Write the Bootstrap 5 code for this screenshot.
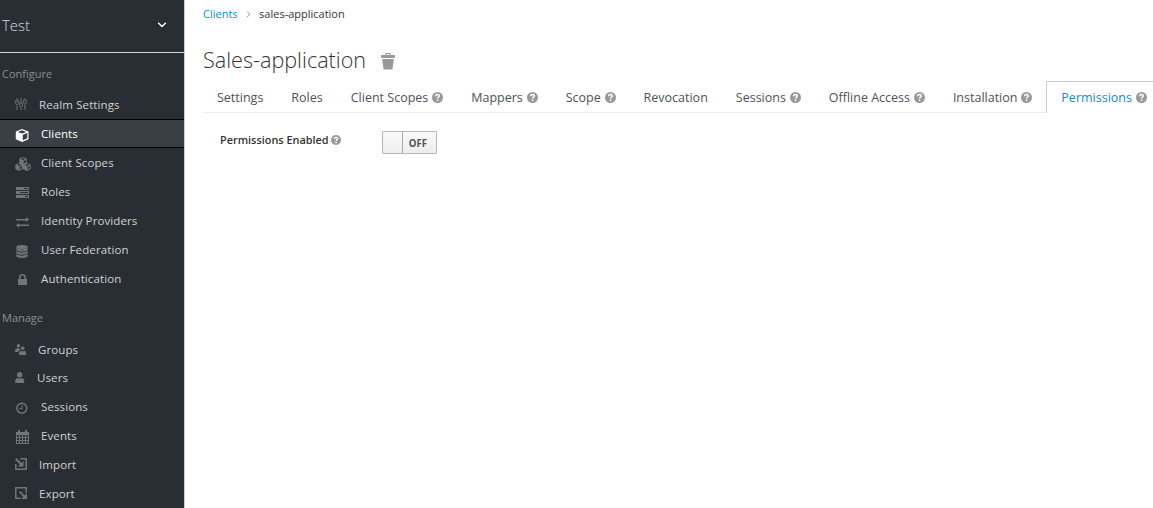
<!DOCTYPE html>
<html lang="en">
<head>
<meta charset="utf-8">
<meta name="viewport" content="width=device-width, initial-scale=1">
<title>Sales-application</title>
<link href="https://cdn.jsdelivr.net/npm/bootstrap@5.3.0/dist/css/bootstrap.min.css" rel="stylesheet">
<style>
body{font-family:"Open Sans",sans-serif;font-size:11px;line-height:18px;color:#333;background:#fff;height:508px;overflow:hidden}
a{text-decoration:none}
.side{width:185px;height:508px;background:#292e34;border-right:1px solid #d1d1d1}
.realm{height:53px;border-bottom:1px solid #d5d5d5;color:#dbdbdb;font-size:15px;font-weight:300;padding:0 17px 2px 2px}
.group-title{height:37px;padding:12px 0 0 2px;color:#8b8d8f;font-size:11px}
.group-title.second{height:42px;padding-top:16px}
.side .nav-link{height:29px;padding:0 0 0 15px;color:#d1d1d1;font-size:11.5px;letter-spacing:.11px;border:solid transparent;border-width:1px 0}
.side .nav-link.active{background:#393f45;border-color:#030303;color:#fff}
.side .nav-link.short{height:28px;padding-top:1px}
.ico{width:26px;height:15px;color:#72767b;flex:none;display:block;padding-top:2px}
.active .ico{color:#fff}
.ico.pf{width:24px;padding:0}.ico.grp{width:23px;padding:2px 0 0}.ico.usr{width:22px;padding:2px 0 0}
.ico.low{padding-top:3px}
.ico.pf.eq,.ico.pf.io{padding-top:1px}
.ico svg,.trash svg{display:block;fill:currentColor;overflow:visible}
.main{padding-left:18px;width:968px;overflow:hidden}
.crumbs{height:28px;font-size:11px}
.crumbs a,.tabs .nav-link.active{color:#0a8fd0}
h1{font-size:21.6px;font-weight:300;line-height:26px;margin:15px 0 4px;height:34px;color:#333}
.trash{color:#999;margin-left:15px;padding-top:3px}
.tabs{height:32px;width:1000px;border-bottom:1px solid #ededec}
.tabs .nav-link{height:32px;padding:1px 14px 0;border:0;border-radius:0;color:#4d5258;font-size:12.5px;white-space:nowrap;gap:3.9px}
.tabs .nav-link.active{background:#fff;border:1px solid #d1d1d1;border-bottom:0;padding-top:0}
.help{width:11px;height:11px;flex:none;display:block}
.perm{padding:18px 0 0 17px}
.perm-label{width:162px;font-weight:600;font-size:10.9px;gap:2.5px;height:18px}
.perm-label .help{width:10px;height:10px}
.switch{width:55px;height:23px;border:1px solid #b7b7b7;border-radius:1px;background:linear-gradient(#fafafa,#ededed);font-size:9.7px;font-weight:700;color:#4d5258}
.knob{width:20px;border-right:1px solid #aaa;align-self:stretch}
.off{padding:2px 3px 0 0}
</style>
</head>
<body class="d-flex">
<svg class="d-none">
<symbol id="q" viewBox="0 0 12 12"><circle cx="6" cy="6" r="6" fill="#999"/><path d="M3.900 4.700C4 3.300 4.900 2.800 6 2.800 7.200 2.800 8 3.400 8 4.300 8 5.500 6.100 5.500 6.100 7.200" fill="none" stroke="#fff" stroke-width="1.600"/><path d="M5.200 8.100h1.700v1.700H5.200z" fill="#fff"/></symbol>
</svg>
<nav class="side flex-shrink-0">
<div class="realm d-flex align-items-center justify-content-between"><span>Test</span><svg width="10" height="6" viewBox="0 0 10 6"><path d="M1.200.8 5 4.600 8.800.8" fill="none" stroke="#fff" stroke-width="1.400"/></svg></div>
<div class="group-title">Configure</div>
<div class="nav flex-column flex-nowrap">
<a class="nav-link d-flex align-items-center" href="#"><span class="ico pf eq"><svg width="12" height="13"><path d="M1.500 0h1v4h-1zM1.500 8h1v4h-1zM5.500 0h1v6h-1zM5.500 10h1v2h-1zM9.500 0h1v3h-1zM9.500 7h1v5h-1z"/><path d="M.7 2v3.500L2 7l1.300-1.500V2M4.700 4.500V8L6 9.500 7.300 8V4.500M8.700 1.500V5L10 6.500 11.300 5V1.500" fill="none" stroke="currentColor" stroke-width=".9"/></svg></span>Realm Settings</a>
<a class="nav-link active d-flex align-items-center" href="#"><span class="ico low"><svg width="14" height="13" viewBox="0 0 14 13"><path fill-rule="evenodd" d="M7 0l6.500 2.400v7.800L7 13 .8 10.200V2.400zM7 1.300 2.700 2.900 7 4.500l4.300-1.600zM7.800 5.700v5.500l4.500-2V4z"/></svg></span>Clients</a>
<a class="nav-link d-flex align-items-center" href="#"><span class="ico"><svg width="16" height="14" viewBox="0 0 16 13" preserveAspectRatio="none"><path fill-rule="evenodd" d="M8 0l3.700 1.500v4l4 1.600v4L12 13l-4-1.800L4 13 .3 11.100v-4l4-1.600v-4zM8 1 5.800 1.900 8 2.800l2.200-.9zM8.500 3.700v2.200l2.300-.9V2.800zM4.200 6.500 2 7.400l2.200.9 2.200-.9zM4.700 9.200v2.300L7 10.400V8.300zM12 6.500l-2.200.9 2.200.9 2.200-.9zM12.500 9.200v2.300l2.300-1.100V8.300z"/></svg></span>Client Scopes</a>
<a class="nav-link d-flex align-items-center" href="#"><span class="ico"><svg width="14" height="12"><path fill-rule="evenodd" d="M1 1h13v3H1zM1 5h13v3H1zM1 9h13v3H1zM9 2v1h4V2zM5 6v1h8V6zM10 10v1h3v-1z"/></svg></span>Roles</a>
<a class="nav-link d-flex align-items-center" href="#"><span class="ico low"><svg width="14" height="12"><path d="M1 3h10V1l3 2.500L11 6V4.500H1zM14 8.500H4V7L1 9.300l3 2.400V10h10z"/></svg></span>Identity Providers</a>
<a class="nav-link d-flex align-items-center" href="#"><span class="ico low"><svg width="13" height="13"><ellipse cx="7" cy="2" rx="5.800" ry="2"/><path d="M1.200 3.100Q7 6 12.800 3.100v1.600Q12 6.500 7 6.600 2 6.500 1.200 4.700zM1.200 6.200Q7 9 12.800 6.200v1.600Q12 9.600 7 9.700 2 9.600 1.200 7.800zM1.200 9.300Q7 12.100 12.800 9.300V11Q12 12.900 7 13 2 12.900 1.200 11z"/></svg></span>User Federation</a>
<a class="nav-link d-flex align-items-center" href="#"><span class="ico low"><svg width="13" height="12"><path d="M3 5h9v6H3z"/><path d="M4.800 6V3.400a2.700 2.700 0 0 1 5.400 0V6" fill="none" stroke="currentColor" stroke-width="1.600"/></svg></span>Authentication</a>
</div>
<div class="group-title second">Manage</div>
<div class="nav flex-column flex-nowrap">
<a class="nav-link short d-flex align-items-center" href="#"><span class="ico grp"><svg width="11" height="11"><circle cx="3.500" cy="1.800" r="1.700"/><circle cx="7.700" cy="4.300" r="1.800"/><path d="M0 8V6.200Q.3 4.200 2.500 4.200h2.200Q5.500 6.200 4 7.100 3 7.500 2.900 8zM4 11V9Q4.300 7 6 6.800q1.700 1 3.400 0Q11 7 11 9v2z"/></svg></span>Groups</a>
<a class="nav-link d-flex align-items-center" href="#"><span class="ico usr"><svg width="10" height="11"><circle cx="4.700" cy="2.700" r="2.700"/><path d="M.2 11V8.500Q.5 6.300 2.700 6q2 1.200 4 0Q9 6.300 9.200 8.500V11z"/></svg></span>Users</a>
<a class="nav-link d-flex align-items-center" href="#"><span class="ico low"><svg width="13" height="12"><circle cx="6.800" cy="6.200" r="4.900" fill="none" stroke="currentColor" stroke-width="1.500"/><path d="M7 3v3.700H4.300" fill="none" stroke="currentColor"/></svg></span>Sessions</a>
<a class="nav-link d-flex align-items-center" href="#"><span class="ico"><svg width="14" height="14"><path fill-rule="evenodd" d="M1 2h2V0h2v2h5V0h2v2h2v12H1zM2 5v2h2V5zM5 5v2h2V5zM8 5v2h2V5zM11 5v2h2V5zM2 8v2h2V8zM5 8v2h2V8zM8 8v2h2V8zM11 8v2h2V8zM2 11v2h2v-2zM5 11v2h2v-2zM8 11v2h2v-2zM11 11v2h2v-2z"/></svg></span>Events</a>
<a class="nav-link d-flex align-items-center" href="#"><span class="ico pf io"><svg width="12" height="12"><path d="M5.500.8h5.700v10.400H.8V6" fill="none" stroke="currentColor" stroke-width="1.500"/><path d="M0 1.500 1.500 0 6.500 5 8.500 3v5.500H3L5 6.500z"/></svg></span>Import</a>
<a class="nav-link d-flex align-items-center" href="#"><span class="ico pf io"><svg width="12" height="12"><path d="M5.500 11.200H.8V.8h10.400v5" fill="none" stroke="currentColor" stroke-width="1.500"/><path d="M4 5.300 5.300 4l4.200 4.200L12 6.500V12H6.500l1.700-2.500z"/></svg></span>Export</a>
</div>
</nav>
<main class="main">
<div class="crumbs d-flex align-items-center"><a href="#">Clients</a><svg class="mx-2" width="5.500" height="8" viewBox="0 0 5 8"><path d="m1 1.500 2.500 2.700L1 7" fill="none" stroke="#999"/></svg><span>sales-application</span></div>
<h1 class="d-flex align-items-center"><span>Sales-application</span><span class="trash"><svg width="14" height="17"><path fill-rule="evenodd" d="M0 2h4.500V0h5v2H14v3H0zM5.700 1v1h2.600V1zM1.200 6h11.600l-1.300 10.500h-9z"/></svg></span></h1>
<div class="nav tabs flex-nowrap">
<a class="nav-link d-flex align-items-center" href="#">Settings</a>
<a class="nav-link d-flex align-items-center" href="#">Roles</a>
<a class="nav-link d-flex align-items-center" href="#">Client Scopes<svg class="help"><use href="#q"/></svg></a>
<a class="nav-link d-flex align-items-center" href="#">Mappers<svg class="help"><use href="#q"/></svg></a>
<a class="nav-link d-flex align-items-center" href="#">Scope<svg class="help"><use href="#q"/></svg></a>
<a class="nav-link d-flex align-items-center" href="#">Revocation</a>
<a class="nav-link d-flex align-items-center" href="#">Sessions<svg class="help"><use href="#q"/></svg></a>
<a class="nav-link d-flex align-items-center" href="#">Offline Access<svg class="help"><use href="#q"/></svg></a>
<a class="nav-link d-flex align-items-center" href="#">Installation<svg class="help"><use href="#q"/></svg></a>
<a class="nav-link active d-flex align-items-center" href="#">Permissions<svg class="help"><use href="#q"/></svg></a>
</div>
<div class="perm d-flex">
<div class="perm-label d-flex align-items-center">Permissions Enabled<svg class="help"><use href="#q"/></svg></div>
<div class="switch d-flex align-items-center"><span class="knob"></span><span class="off flex-grow-1 text-center">OFF</span></div>
</div>
</main>
<script src="https://cdn.jsdelivr.net/npm/bootstrap@5.3.0/dist/js/bootstrap.bundle.min.js"></script>
</body>
</html>
